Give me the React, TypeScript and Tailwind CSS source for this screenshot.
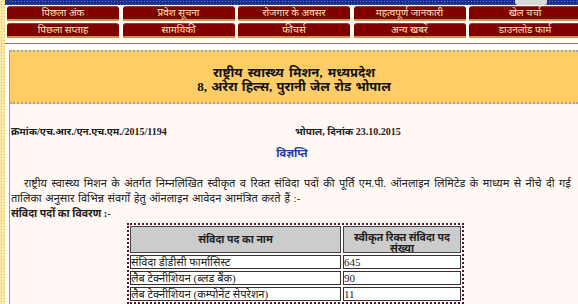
import React from "react";

const row1 = ["पिछला अंक", "प्रवेश सूचना", "रोजगार के अवसर", "महत्वपूर्ण जानकारी", "खेल चर्चा"];
const row2 = ["पिछला सप्ताह", "सामयिकी", "फीचर्स", "अन्य खबरें", "डाउनलोड फार्म"];

function NavBtn({ label }: { label: string }) {
  return (
    <div className="h-[15px] w-[112px] shrink-0 rounded-t-[3px] bg-[#800000] border-t border-[#a03a2a] border-b-2 border-b-[#c9944a] flex items-center justify-center text-[10px] leading-none text-[#ffe9b8]">
      {label}
    </div>
  );
}

const rows = [
  ["संविदा डीडीसी फार्मासिस्ट", "645"],
  ["लैब टेक्नीशियन (ब्लड बैंक)", "90"],
  ["लैब टेक्नीशियन (कम्पोनेंट सेपरेशन)", "11"],
];

export default function App() {
  const font = { fontFamily: '"Liberation Serif", "Noto Sans", "DejaVu Sans", serif' };
  return (
    <div className="w-[578px] h-[304px] overflow-hidden bg-white relative" style={font}>
      <div className="flex h-full">
        <div className="w-[5px] shrink-0 bg-[#ffe9a8] bg-[radial-gradient(#f3b94f_0.8px,transparent_1px)] bg-[length:3px_3px]" />
        <div className="flex-1 flex flex-col min-w-0">
          <div className="h-[7px] bg-[#1c2f8a] bg-[radial-gradient(#5a72d0_0.7px,transparent_1px)] bg-[length:3px_3px] relative">
            <div className="absolute left-[510px] top-0 w-[32px] h-[5px] bg-[#d8d8d8] rounded-b-[3px]" />
          </div>
          <div className="h-[1px] bg-[#fff4d8]" />
          <div className="bg-[#fffdf6] pl-[2px] pt-[1px] flex flex-col gap-[2px]">
            <div className="flex gap-[3.5px]">
              {row1.map((l) => (
                <NavBtn key={l} label={l} />
              ))}
            </div>
            <div className="flex gap-[3.5px]">
              {row2.map((l) => (
                <NavBtn key={l} label={l} />
              ))}
            </div>
          </div>
          <div className="h-[7px] bg-[#fffdf6]" />
          <div className="h-[2px] bg-[#8b7272]" />
          <div className="h-[9px] bg-white" />
          <div className="ml-[4px] flex-1 border-l border-[#9a9a9a] flex flex-col bg-[#fff8f5]">
            <div className="h-[54px] bg-[#ffcc66] border-t-2 border-dashed border-t-[#a8a8a8] border-b-2 border-b-[#b0a8a0] border-dotted flex flex-col items-center justify-center pt-[5px] font-bold text-[13px] text-[#111]">
              <div className="h-[14px] leading-[14px] whitespace-nowrap [word-spacing:2px]">राष्ट्रीय स्वास्थ्य मिशन, मध्यप्रदेश</div>
              <div className="h-[14px] leading-[14px] whitespace-nowrap [word-spacing:1px]">8, अरेरा हिल्स, पुरानी जेल रोड भोपाल</div>
            </div>
            <div className="px-[1px] pt-[20px] text-[11px] text-[#222]">
              <div className="flex font-bold text-[10px] h-[15px] leading-[15px] whitespace-nowrap">
                <div className="w-[284px]">क्रमांक/एच.आर./एन.एच.एम./2015/1194</div>
                <div>भोपाल, दिनांक 23.10.2015</div>
              </div>
              <div className="text-center font-bold text-[#1a3aa8] mt-[7px] pr-[4px] h-[15px] leading-[15px]">विज्ञप्ति</div>
              <div className="mt-[15px] pl-[13px] h-[15px] leading-[15px] whitespace-nowrap [word-spacing:1.7px]">
                राष्ट्रीय स्वास्थ्य मिशन के अंतर्गत निम्नलिखित स्वीकृत व रिक्त संविदा पदों की पूर्ति एम.पी. ऑनलाइन लिमिटेड के माध्यम से नीचे दी गई
              </div>
              <div className="h-[15px] leading-[15px] whitespace-nowrap [word-spacing:0.8px]">
                तालिका अनुसार विभिन्न संवर्गों हेतु ऑनलाइन आवेदन आमंत्रित करते हैं :-
              </div>
              <div className="font-bold text-[10.5px] h-[15px] leading-[15px] whitespace-nowrap">संविदा पदों का विवरण :-</div>
              <div className="mt-[2px] ml-[116px] w-[337px] border-2 border-[#5a1030] border-dotted">
                <div className="grid grid-cols-[211px_1fr] gap-[2px] p-[1px] bg-[#fff8f5]">
                  <div className="bg-[#cccccc] border border-[#444] h-[27px] flex justify-center font-bold text-[10.5px] leading-[12px] pt-[7px]">संविदा पद का नाम</div>
                  <div className="bg-[#cccccc] border border-[#444] h-[27px] flex flex-col items-center pt-[5px] text-center font-bold text-[10.5px]">
                    <div className="h-[11px] leading-[12px] whitespace-nowrap">स्वीकृत रिक्त संविदा पद</div>
                    <div className="h-[11px] leading-[12px]">संख्या</div>
                  </div>
                  {rows.map(([a, b]) => (
                    <React.Fragment key={a}>
                      <div className="bg-white border border-[#333] h-[14px] leading-[12px] whitespace-nowrap overflow-hidden">{a}</div>
                      <div className="bg-white border border-[#333] h-[14px] leading-[12px]">{b}</div>
                    </React.Fragment>
                  ))}
                </div>
              </div>
            </div>
          </div>
        </div>
      </div>
    </div>
  );
}
